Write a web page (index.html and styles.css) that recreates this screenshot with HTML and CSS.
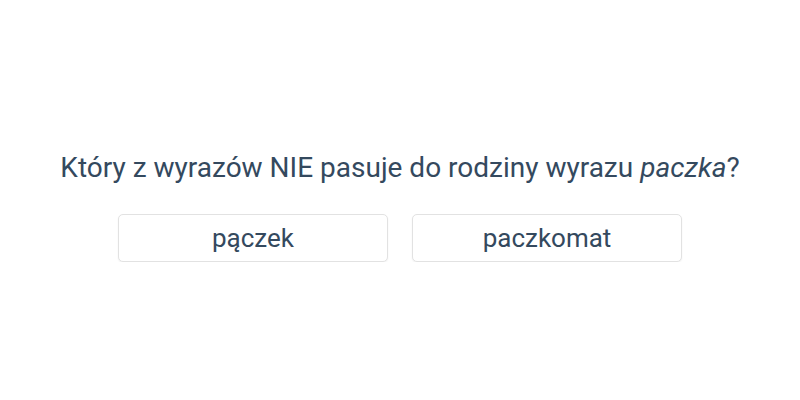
FILE: index.html
```html
<!DOCTYPE html>
<html lang="pl">
<head>
<meta charset="utf-8">
<link rel="stylesheet" href="styles.css">
</head>
<body>
<main class="quiz">
  <h1 class="question">Który z wyrazów NIE pasuje do rodziny wyrazu <em>paczka</em>?</h1>
  <div class="answers">
    <button class="answer">pączek</button>
    <button class="answer">paczkomat</button>
  </div>
</main>
</body>
</html>
```
FILE: styles.css
```css
html, body {
  margin: 0;
  padding: 0;
  background: #fff;
}
body {
  font-family: Roboto, "Noto Sans", sans-serif;
  color: #34495e;
}
.quiz {
  padding-top: 151px;
  display: flex;
  flex-direction: column;
  align-items: center;
}
.question {
  margin: 0 0 30px;
  font-size: 28px;
  font-weight: 400;
  line-height: 33px;
}
.answers {
  display: flex;
  gap: 24px;
}
.answer {
  width: 270px;
  height: 48px;
  background: #fff;
  border: 1px solid #e2e2e2;
  border-radius: 5px;
  box-shadow: 0 1px 2px rgba(0,0,0,0.06);
  font-family: Roboto, "Noto Sans", sans-serif;
  font-size: 26px;
  color: #34495e;
  padding: 0;
}
```
